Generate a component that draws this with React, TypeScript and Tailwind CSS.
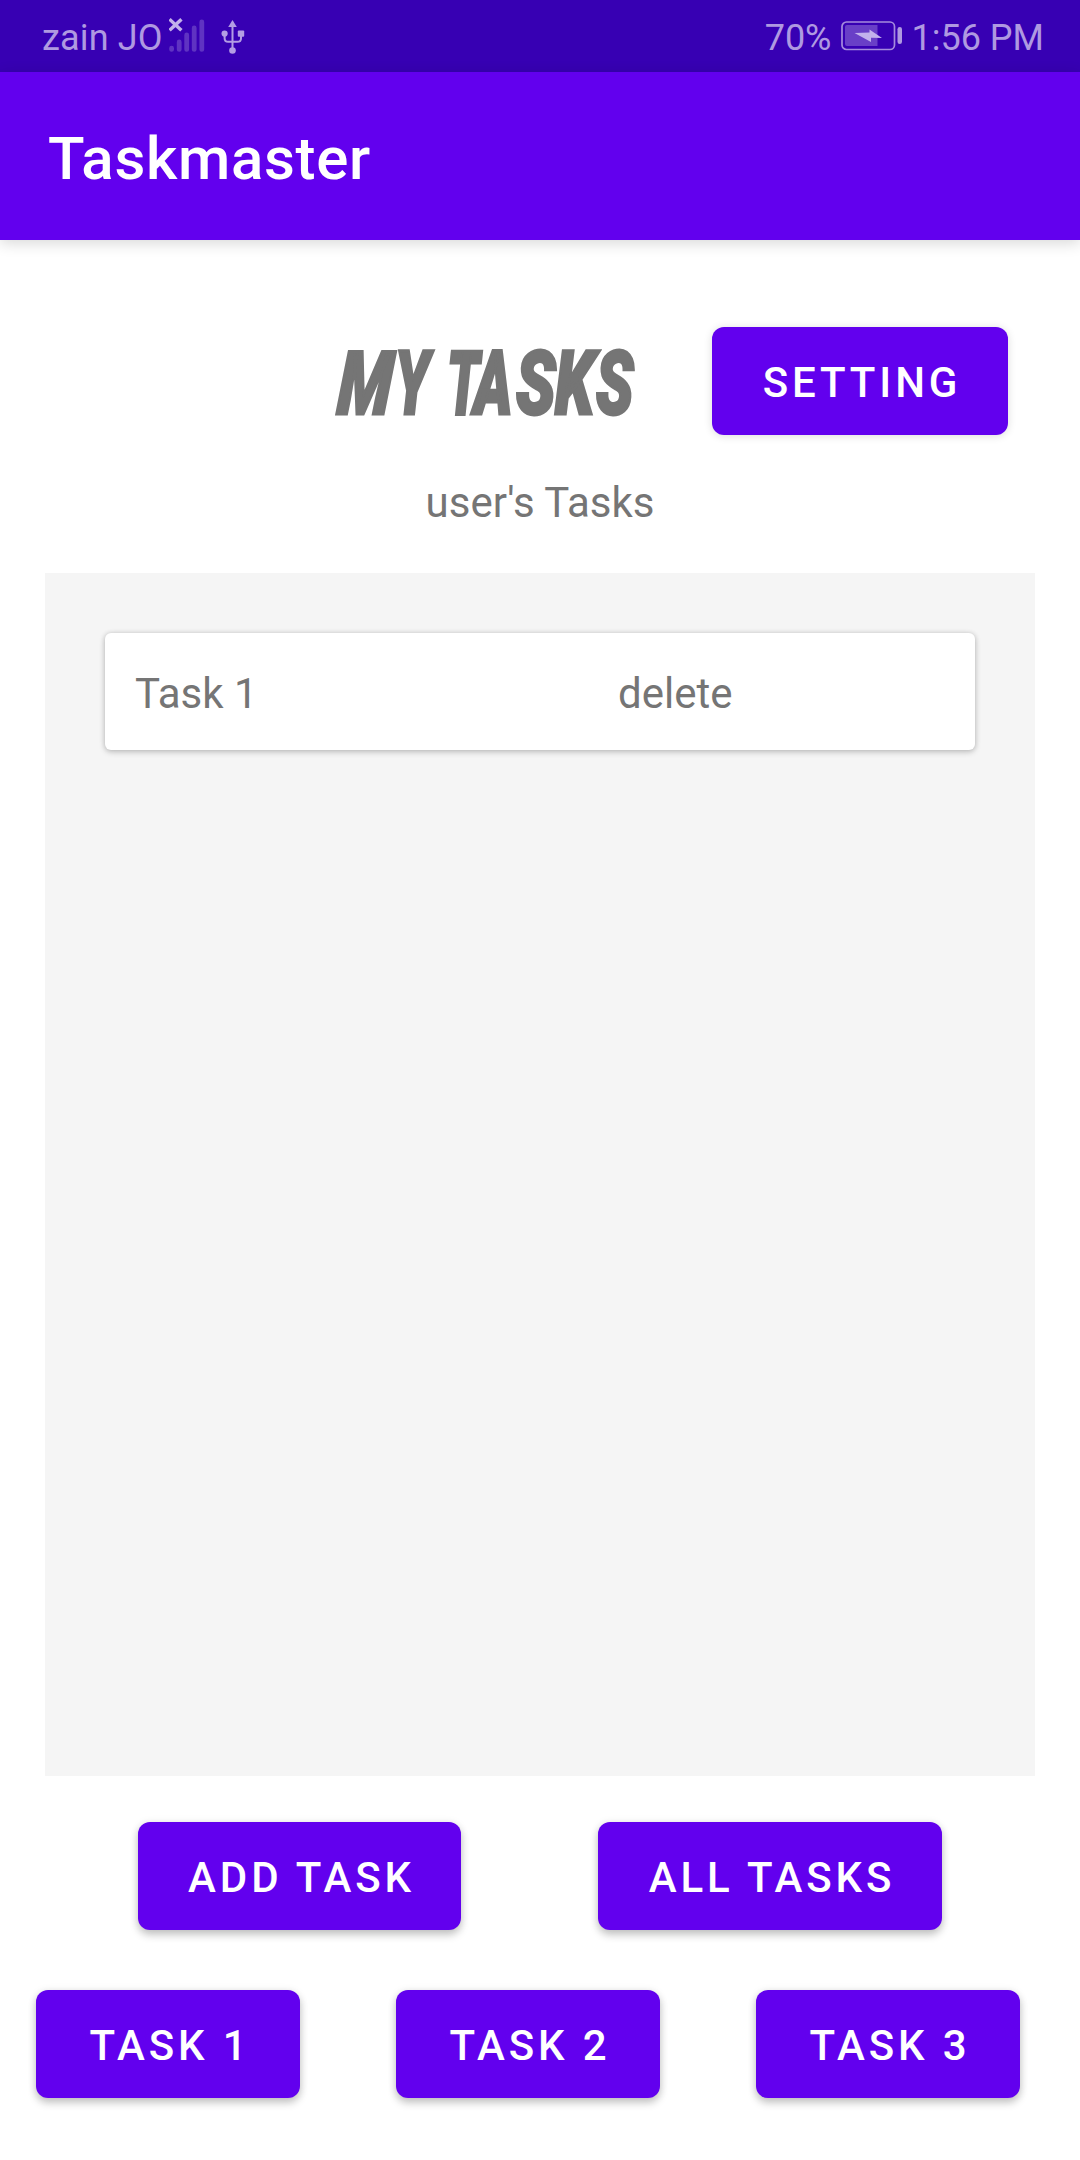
import type { ReactNode } from "react";

function SignalIcon() {
  return (
    <svg width="36" height="36" viewBox="0 0 36 36" className="ml-[6px] mt-[-1px] shrink-0">
      <g stroke="#fff" strokeOpacity="0.2" strokeWidth="4.8" strokeLinecap="round">
        <path d="M2.6 30.2v1.2M10.2 24v7.4M17.7 17v14.4M25.2 10v21.4M32.8 4v27.4" />
      </g>
      <path d="M1.8 2.4l9.4 8.8M11.2 2.4l-9.4 8.8" stroke="#c3b0ea" strokeWidth="3.4" strokeLinecap="square" />
    </svg>
  );
}

function UsbIcon() {
  return (
    <svg width="24" height="36" viewBox="0 0 24 36" fill="#b39de4" className="ml-4 mt-[1px] shrink-0">
      <path d="M11.5 1l4.3 7H7.2z" />
      <circle cx="11.5" cy="31.5" r="3.3" />
      <circle cx="3.6" cy="14.6" r="3.1" />
      <rect x="16.8" y="11.4" width="6.4" height="6.4" rx="1" />
      <path
        d="M11.5 7v24M3.6 15v4.2q0 3.6 3.6 3.6h9.2q3.6 0 3.6-3.6V15"
        fill="none"
        stroke="#b39de4"
        strokeWidth="2"
      />
    </svg>
  );
}

function BatteryIcon() {
  return (
    <svg width="62" height="30" viewBox="0 0 62 30" className="shrink-0">
      <rect x="1" y="1" width="52.5" height="27.5" rx="4.5" fill="none" stroke="#a58bdd" strokeWidth="1.7" />
      <path d="M6 4h30.5v21H6a2 2 0 0 1-2-2V6a2 2 0 0 1 2-2z" fill="#693fc7" />
      <path d="M13.5 12l15-.5V8.5L41 17l-11-.2V21z" fill="#c3b2ec" />
      <rect x="56.5" y="6" width="4.5" height="17" rx="2.2" fill="#af99e1" />
    </svg>
  );
}

function PurpleButton({ className, children }: { className: string; children: ReactNode }) {
  return (
    <button
      className={`h-[108px] shrink-0 whitespace-nowrap rounded-[12px] bg-[#6200ee] pl-[4px] pt-[3px] text-center text-[42px] font-medium leading-[54px] tracking-[3.9px] text-white ${className}`}
    >
      {children}
    </button>
  );
}

const lowShadow = "shadow-[0_5px_8px_rgba(0,0,0,0.2),0_1px_8px_rgba(0,0,0,0.1)]";

const letters = [
  { char: "M", cell: "w-[60px]", shape: "scale-x-[0.72] -skew-x-6" },
  { char: "Y", cell: "w-[40px]", shape: "scale-x-[0.64]" },
  { char: " ", cell: "w-[12px]", shape: "scale-x-[0.5]" },
  { char: "T", cell: "w-[27px]", shape: "scale-x-[0.6]" },
  { char: "A", cell: "w-[42px]", shape: "scale-x-[0.66]" },
  { char: "S", cell: "w-[39px]", shape: "scale-x-[0.74]" },
  { char: "K", cell: "w-[41px]", shape: "scale-x-[0.72]" },
  { char: "S", cell: "w-[40px]", shape: "scale-x-[0.7]" },
];

function ComicTitle() {
  return (
    <h2 className="mt-[5px] flex h-[96px] w-[301px] whitespace-pre text-[88px] font-black italic leading-[96px] text-[#757575] [-webkit-text-stroke:3px_#757575]">
      {letters.map((letter, index) => (
        <span key={index} className={`shrink-0 ${letter.cell}`}>
          <span className={`inline-block origin-bottom-left ${letter.shape}`}>{letter.char}</span>
        </span>
      ))}
    </h2>
  );
}

export default function App() {
  return (
    <div className="flex h-[2160px] w-[1080px] flex-col overflow-hidden bg-white font-['Roboto',sans-serif]">
      <div className="flex h-[72px] shrink-0 items-center bg-[#3700b3] pl-[42px] pr-[36px] text-[36px] leading-[42px] text-[#af99e1]">
        <span className="whitespace-nowrap pt-[3px] tracking-[0.15px]">zain JO</span>
        <SignalIcon />
        <UsbIcon />
        <span className="ml-auto mr-[9px] pt-[3px]">70%</span>
        <BatteryIcon />
        <span className="ml-[9px] whitespace-nowrap pt-[3px]">1:56 PM</span>
      </div>

      <header className="z-10 flex h-[168px] shrink-0 items-center bg-[#6200ee] pl-[48px] pt-[5px] shadow-[0_3px_14px_rgba(0,0,0,0.16)]">
        <h1 className="text-[60px] font-medium leading-[70px] tracking-[0.7px] text-white">Taskmaster</h1>
      </header>

      <div className="mt-[87px] flex h-[108px] shrink-0 items-center pl-[335px] pr-[72px]">
        <ComicTitle />
        <PurpleButton className="ml-auto w-[296px] shadow-[0_1px_8px_rgba(0,0,0,0.14)]">SETTING</PurpleButton>
      </div>

      <p className="mt-[43px] shrink-0 text-center text-[42px] leading-[49px] text-[#757575]">user's Tasks</p>

      <main className="mx-[45px] mt-[46px] h-[1203px] shrink-0 bg-[#f5f5f5] px-[60px] pt-[60px]">
        <div className="flex h-[117px] items-center rounded-[6px] bg-white px-[30px] pt-[4px] text-[42px] leading-[49px] text-[#757575] shadow-[0_2px_6px_rgba(0,0,0,0.2),0_0_5px_rgba(0,0,0,0.12)]">
          <span className="w-[483px]">Task 1</span>
          <span>delete</span>
        </div>
      </main>

      <div className="mt-[46px] flex shrink-0 justify-between pl-[138px] pr-[138px]">
        <PurpleButton className={`w-[323px] ${lowShadow}`}>ADD TASK</PurpleButton>
        <PurpleButton className={`w-[344px] ${lowShadow}`}>ALL TASKS</PurpleButton>
      </div>

      <div className="mt-[60px] flex shrink-0 gap-[96px] pl-[36px]">
        <PurpleButton className={`w-[264px] ${lowShadow}`}>TASK 1</PurpleButton>
        <PurpleButton className={`w-[264px] ${lowShadow}`}>TASK 2</PurpleButton>
        <PurpleButton className={`w-[264px] ${lowShadow}`}>TASK 3</PurpleButton>
      </div>
    </div>
  );
}
